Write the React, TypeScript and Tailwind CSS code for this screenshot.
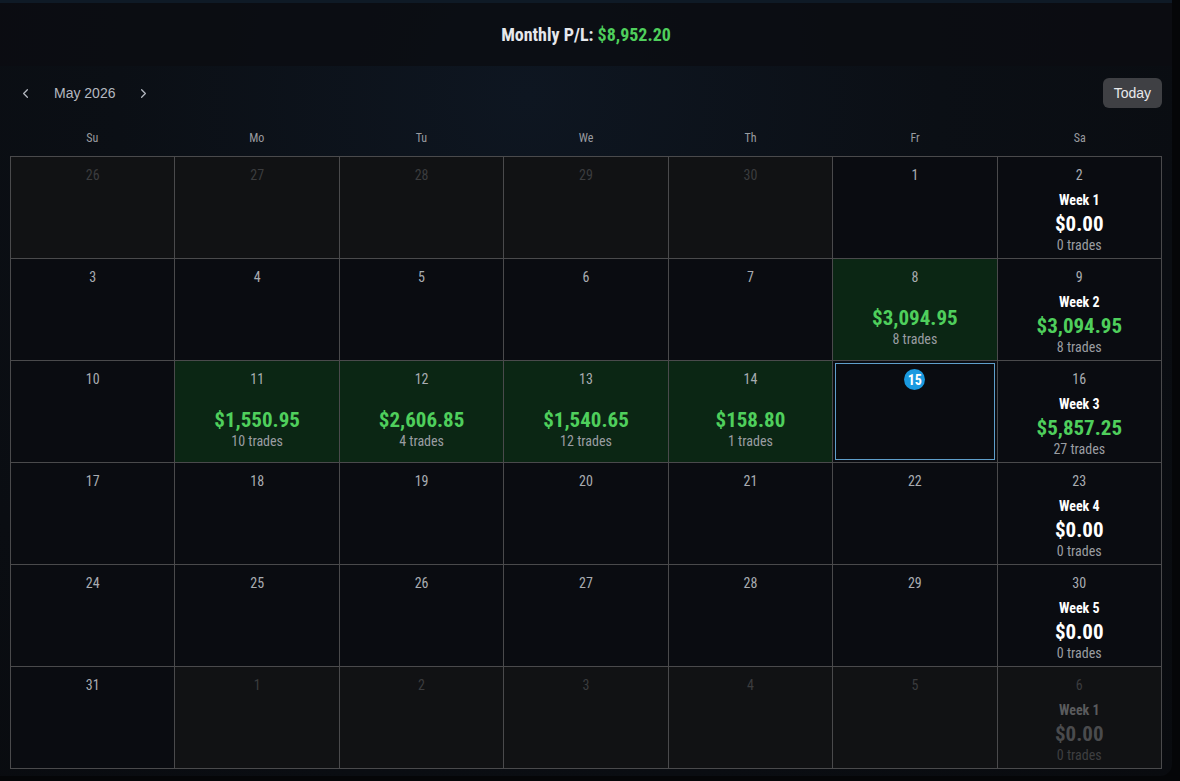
import { ChevronLeft, ChevronRight } from "lucide-react";

type Day = {
  n: number;
  muted?: boolean;
  pnl?: string;
  trades?: number;
  today?: boolean;
  week?: { label: string; pnl: string; trades: number; green?: boolean };
};

const rows: Day[][] = [
  [
    { n: 26, muted: true },
    { n: 27, muted: true },
    { n: 28, muted: true },
    { n: 29, muted: true },
    { n: 30, muted: true },
    { n: 1 },
    { n: 2, week: { label: "Week 1", pnl: "$0.00", trades: 0 } },
  ],
  [
    { n: 3 },
    { n: 4 },
    { n: 5 },
    { n: 6 },
    { n: 7 },
    { n: 8, pnl: "$3,094.95", trades: 8 },
    { n: 9, week: { label: "Week 2", pnl: "$3,094.95", trades: 8, green: true } },
  ],
  [
    { n: 10 },
    { n: 11, pnl: "$1,550.95", trades: 10 },
    { n: 12, pnl: "$2,606.85", trades: 4 },
    { n: 13, pnl: "$1,540.65", trades: 12 },
    { n: 14, pnl: "$158.80", trades: 1 },
    { n: 15, today: true },
    { n: 16, week: { label: "Week 3", pnl: "$5,857.25", trades: 27, green: true } },
  ],
  [
    { n: 17 },
    { n: 18 },
    { n: 19 },
    { n: 20 },
    { n: 21 },
    { n: 22 },
    { n: 23, week: { label: "Week 4", pnl: "$0.00", trades: 0 } },
  ],
  [
    { n: 24 },
    { n: 25 },
    { n: 26 },
    { n: 27 },
    { n: 28 },
    { n: 29 },
    { n: 30, week: { label: "Week 5", pnl: "$0.00", trades: 0 } },
  ],
  [
    { n: 31 },
    { n: 1, muted: true },
    { n: 2, muted: true },
    { n: 3, muted: true },
    { n: 4, muted: true },
    { n: 5, muted: true },
    { n: 6, muted: true, week: { label: "Week 1", pnl: "$0.00", trades: 0 } },
  ],
];

const days = ["Su", "Mo", "Tu", "We", "Th", "Fr", "Sa"];

function Cell({ d }: { d: Day }) {
  const bg = d.muted
    ? "bg-[#111214]"
    : d.pnl
    ? "bg-[#0b2614]"
    : "bg-[#0a0c11]";

  return (
    <div className={`relative flex flex-col items-center ${bg}`}>
      {d.today && (
        <div className="absolute inset-[2px] border border-[#5f9fcb]"></div>
      )}
      {d.today ? (
        <div className="mt-[8px] w-[21px] h-[21px] rounded-full bg-[#1a9ae0] flex items-center justify-center text-white text-[14px] font-bold leading-none">
          {d.n}
        </div>
      ) : (
        <div
          className={`mt-[9px] text-[14px] leading-[18px] ${
            d.muted ? "text-[#3b3c3e]" : "text-[#a9acb1]"
          }`}
        >
          {d.n}
        </div>
      )}
      {d.pnl && (
        <>
          <div className="mt-[19px] text-[21px] font-bold leading-[26px] text-[#4fcf5c]">
            {d.pnl}
          </div>
          <div className="text-[14px] leading-[17px] text-[#9a9da2]">
            {d.trades} trades
          </div>
        </>
      )}
      {d.week && (
        <>
          <div
            className={`mt-[8px] text-[14px] font-bold leading-[17px] ${
              d.muted ? "text-[#5a5b5d]" : "text-white"
            }`}
          >
            {d.week.label}
          </div>
          <div
            className={`mt-[2px] text-[21px] font-bold leading-[26px] ${
              d.muted
                ? "text-[#4a4b4d]"
                : d.week.green
                ? "text-[#4fcf5c]"
                : "text-white"
            }`}
          >
            {d.week.pnl}
          </div>
          <div
            className={`text-[14px] leading-[17px] ${
              d.muted ? "text-[#3e3f41]" : "text-[#9a9da2]"
            }`}
          >
            {d.week.trades} trades
          </div>
        </>
      )}
    </div>
  );
}

export default function App() {
  return (
    <div className="w-[1180px] h-[781px] bg-[#050608] overflow-hidden">
      <div className="w-[1172px] h-[776px] rounded-br-xl border-t-[3px] border-[#0f1a26] bg-[radial-gradient(ellipse_at_45%_12%,#0e1621_0%,#0b0f15_45%,#090b0f_100%)] font-['Roboto_Condensed',Roboto,sans-serif] [font-stretch:condensed] flex flex-col">
        <div className="h-[63px] bg-[#0b0d11]/80 flex items-center justify-center text-[18px] font-bold text-[#e6e8ec]">
          Monthly P/L:&nbsp;<span className="text-[#4fcf5c]">$8,952.20</span>
        </div>

        <div className="mt-[12px] h-[30px] flex items-center justify-between pl-[18px] pr-[10px] font-['Liberation_Sans',Arial,sans-serif] [font-stretch:normal]">
          <div className="flex items-center text-[#b4b8c0]">
            <ChevronLeft size={15} strokeWidth={2} />
            <span className="ml-[21px] text-[14px]">May 2026</span>
            <ChevronRight size={15} strokeWidth={2} className="ml-[21px]" />
          </div>
          <button className="h-[30px] px-[11px] rounded-md bg-[#3f4044] text-[14px] text-[#e8e9ec]">
            Today
          </button>
        </div>

        <div className="mt-[22px] mx-[10px] grid grid-cols-7 text-[12px] text-[#9a9ca0]">
          {days.map((d) => (
            <div key={d} className="text-center leading-[16px]">
              {d}
            </div>
          ))}
        </div>

        <div className="mt-[10px] mx-[10px] w-[1152px] h-[613px] grid grid-cols-7 grid-rows-6 gap-px p-px bg-[#4a4a4c]">
          {rows.flat().map((d, i) => (
            <Cell key={i} d={d} />
          ))}
        </div>
      </div>
    </div>
  );
}
